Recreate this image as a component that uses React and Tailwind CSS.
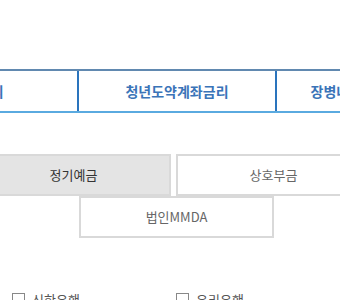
export default function App() {
  const font = { fontFamily: '"Noto Sans CJK KR", "Noto Sans", sans-serif' };
  return (
    <div className="w-[340px] h-[300px] overflow-hidden bg-white" style={font}>
      <div className="mt-[69px] h-[44px] border-t-2 border-b-2 border-t-[#6189b0] border-b-[#5aaae0] flex ml-[-121px] w-[600px]">
        <div className="w-[198px] shrink-0 flex items-center justify-center text-[14px] font-bold text-[#3a74b8]">예금금리</div>
        <div className="w-[198px] shrink-0 border-l-2 border-[#2a74bd] flex items-center justify-center text-[14px] font-bold text-[#3a74b8]">청년도약계좌금리</div>
        <div className="w-[198px] shrink-0 border-l-2 border-[#2a74bd] flex items-center justify-center text-[14px] font-bold text-[#3a74b8]">장병내일준비적금금리</div>
      </div>

      <div className="mt-[41px] flex ml-[-24px] gap-[5px] w-[400px]">
        <button className="w-[195px] h-[42px] shrink-0 border-2 border-[#d9d9d9] bg-[#e4e4e4] text-[13px] text-[#333]">정기예금</button>
        <button className="w-[195px] h-[42px] shrink-0 border-2 border-[#d9d9d9] bg-white text-[13px] text-[#666]">상호부금</button>
      </div>
      <div className="flex ml-[79px]">
        <button className="w-[195px] h-[42px] border-2 border-[#d9d9d9] bg-white text-[13px] text-[#666]">법인MMDA</button>
      </div>

      <div className="mt-[52px] flex pl-[12px] text-[13px] text-[#555]">
        <label className="w-[165px] flex items-center gap-[7px]">
          <span className="w-[13px] h-[13px] border border-[#888] bg-white"></span>
          신한은행
        </label>
        <label className="w-[165px] flex items-center gap-[7px]">
          <span className="w-[13px] h-[13px] border border-[#888] bg-white"></span>
          우리은행
        </label>
      </div>
    </div>
  );
}
